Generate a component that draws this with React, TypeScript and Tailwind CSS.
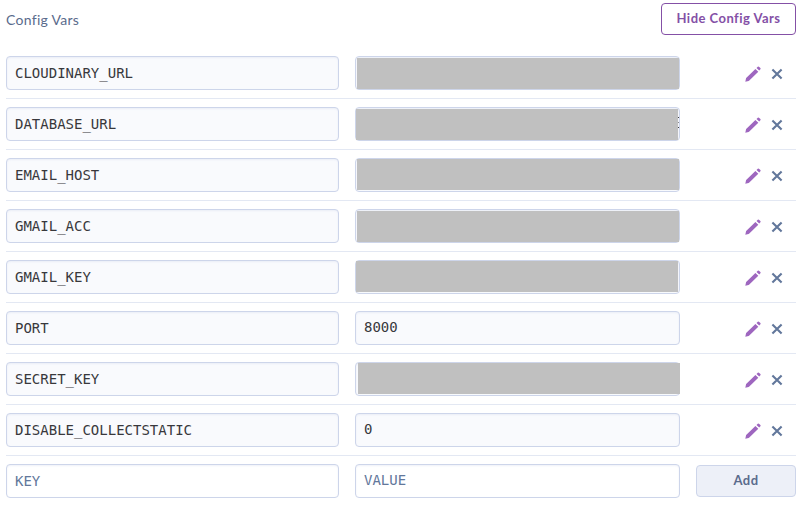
type Mask = { pos: string; dots?: boolean };
type Row = { name: string; value?: string; mask?: Mask };

const rows: Row[] = [
  { name: "CLOUDINARY_URL", mask: { pos: "left-[1px] right-0 top-[1px] bottom-0" } },
  { name: "DATABASE_URL", mask: { pos: "left-0 right-[1px] top-[1px] bottom-0", dots: true } },
  { name: "EMAIL_HOST", mask: { pos: "left-[1px] right-0 top-0 bottom-[1px]" } },
  { name: "GMAIL_ACC", mask: { pos: "left-[1px] right-0 top-[1px] bottom-0" } },
  { name: "GMAIL_KEY", mask: { pos: "left-0 right-[1px] top-0 bottom-[1px]" } },
  { name: "PORT", value: "8000" },
  { name: "SECRET_KEY", mask: { pos: "left-[2px] -right-px top-0 bottom-[1px]" } },
  { name: "DISABLE_COLLECTSTATIC", value: "0" },
];

const field =
  "relative flex h-[34px] shrink-0 items-center rounded-[4px] border border-[#cdd5ea] px-2 font-['DejaVu_Sans_Mono',monospace] text-[14px] leading-[20px] shadow-[inset_0_1px_2px_rgba(207,215,234,0.35)]";

function Pencil() {
  return (
    <svg width="16" height="16" viewBox="0 0 16 16" fill="#9e66bf" aria-hidden="true">
      <path d="M0.3 15.7 1 12.4Q1.1 12 1.4 11.7L10.4 2.9 13.3 5.7 4.3 14.6Q4 14.9 3.6 15Z" />
      <path d="M11.5 1.9 12.8 0.7Q13.3 0.2 13.9 0.7L15.4 2.1Q15.9 2.7 15.4 3.2L14.2 4.5Z" />
    </svg>
  );
}

function Cross() {
  return (
    <svg width="10" height="10" viewBox="0 0 10 10" className="overflow-visible" fill="none" stroke="#62779b" strokeWidth="2.1" aria-hidden="true">
      <path d="M0.4 0.4 9.6 9.6M9.6 0.4 0.4 9.6" />
    </svg>
  );
}

export default function App() {
  return (
    <main className="h-[505px] w-[800px] overflow-hidden bg-white pl-[6px] pr-[4px] pt-[3px] font-[Lato,sans-serif]">
      <header className="flex h-[45px] items-start justify-between">
        <h1 className="pt-[7px] text-[14px] leading-[20px] tracking-[0.28px] text-[#5a6b8c]">Config Vars</h1>
        <button className="flex h-8 w-[135px] items-center justify-center whitespace-nowrap rounded-[4px] border border-[#8450a6] pb-px text-[13px] font-bold tracking-[0.47px] text-[#8450a6]">
          Hide Config Vars
        </button>
      </header>
      {rows.map((row) => (
        <div key={row.name} className="flex h-[51px] items-center border-b border-[#e3e8f3]">
          <div className={`${field} w-[333px] bg-[#f9fafd] text-[#38383c]`}>{row.name}</div>
          <div className={`${field} ml-4 w-[325px] bg-[#f9fafd] pb-[2px] text-[#38383c]`}>
            {row.value}
            {row.mask && <span className={`absolute bg-[#c0c0c0] ${row.mask.pos}`} />}
            {row.mask?.dots && (
              <span className="absolute right-0 top-[9px] flex h-[11px] w-px flex-col justify-between">
                <span className="h-px bg-[#3f3f44]" />
                <span className="h-px bg-[#8a8a90]" />
                <span className="h-px bg-[#3f3f44]" />
              </span>
            )}
          </div>
          <div className="ml-[65px] flex items-center gap-[11px] pt-px">
            <Pencil />
            <Cross />
          </div>
        </div>
      ))}
      <div className="flex h-[50px] items-center">
        <div className={`${field} w-[333px] bg-white text-[#62779b]`}>KEY</div>
        <div className={`${field} ml-4 w-[325px] bg-white pb-[2px] text-[#62779b]`}>VALUE</div>
        <button className="ml-4 flex h-8 w-[100px] items-center justify-center rounded-[4px] border border-[#cdd5ea] bg-[#edf0f8] pb-px text-[13px] font-bold tracking-[0.4px] text-[#5a6b8c]">
          Add
        </button>
      </div>
    </main>
  );
}
